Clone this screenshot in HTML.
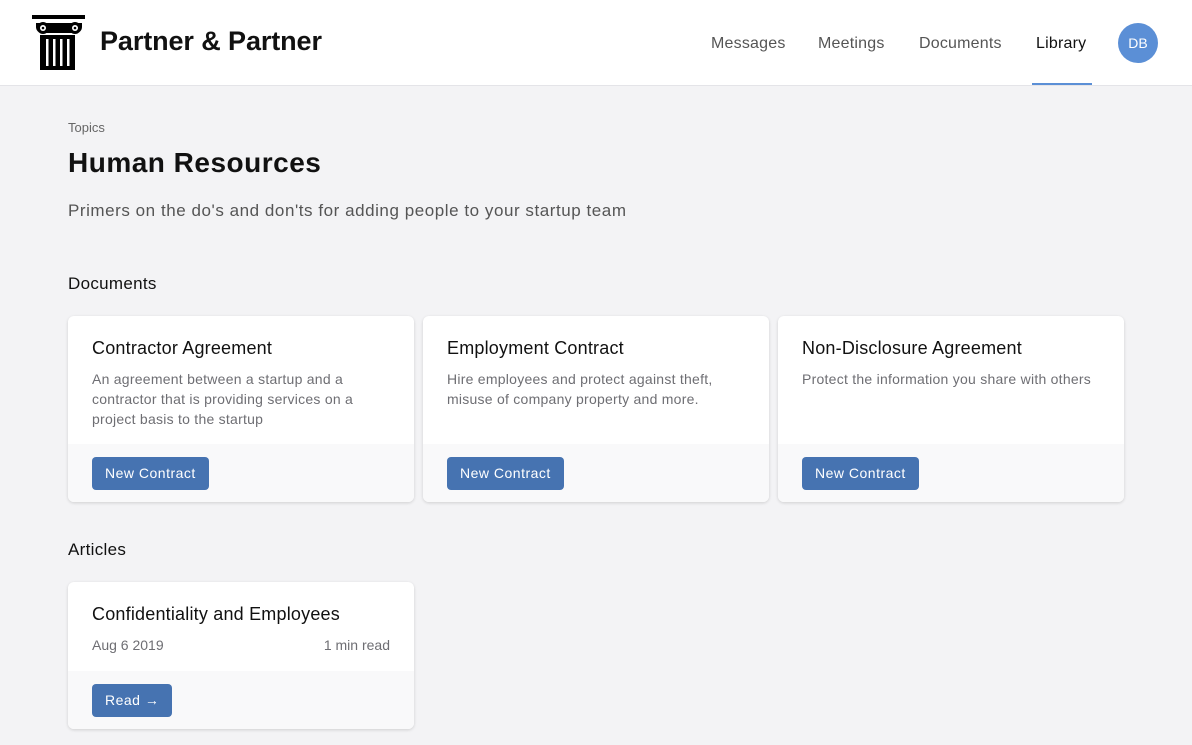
<!DOCTYPE html>
<html><head><style>
*{box-sizing:border-box;margin:0;padding:0}
body{width:1192px;height:745px;background:#f3f3f5;font-family:"Liberation Sans",sans-serif;color:#1a1a1a;position:relative;overflow:hidden}
.hdr{position:absolute;left:0;top:0;width:1192px;height:86px;background:#fff;border-bottom:1px solid #e4e4e8}
.brand{position:absolute;left:100px;top:26px;font-size:27px;font-weight:bold;letter-spacing:-0.1px;color:#111}
.nav a{position:absolute;top:35px;font-size:16px;color:#555;text-decoration:none;letter-spacing:0.2px}
.ul{position:absolute;left:1032px;top:83px;width:60px;height:2px;background:#5b8fd6}
.av{position:absolute;left:1118px;top:23px;width:40px;height:40px;border-radius:50%;background:#5b8fd6;color:#fff;font-size:14px;text-align:center;line-height:40px}
.t{position:absolute}
.card{position:absolute;width:346px;background:#fff;border-radius:6px;box-shadow:0 1px 3px rgba(0,0,0,.15);overflow:hidden}
.card h3{position:absolute;left:24px;top:22px;font-size:18px;font-weight:normal;color:#111;letter-spacing:0.2px}
.card p{position:absolute;left:24px;top:53px;width:275px;font-size:14px;line-height:20px;color:#6e6e73;letter-spacing:0.25px}
.foot{position:absolute;left:0;bottom:0;width:100%;height:58px;background:#f9f9fa}
.btn{position:absolute;left:24px;top:13px;height:33px;padding:0 13px;background:#4673b1;color:#fff;border-radius:4px;font-size:14px;line-height:33px;letter-spacing:0.5px}
</style></head><body>
<div class="hdr">
<svg style="position:absolute;left:32px;top:15px" width="54" height="55" viewBox="0 0 54 55">
<rect x="0" y="0" width="53" height="4" fill="#000"/>
<path d="M4 8h46v4a6 6 0 0 1-6 6H10a6 6 0 0 1-6-6z" fill="#000"/>
<circle cx="11" cy="13" r="6" fill="#000"/><circle cx="43" cy="13" r="6" fill="#000"/>
<circle cx="11" cy="13" r="3" fill="#fff"/><circle cx="43" cy="13" r="3" fill="#fff"/>
<circle cx="11" cy="13" r="1.3" fill="#000"/><circle cx="43" cy="13" r="1.3" fill="#000"/>
<rect x="8" y="20" width="35" height="35" fill="#000"/>
<rect x="14" y="24" width="2.5" height="27" fill="#fff"/><rect x="21" y="24" width="2.5" height="27" fill="#fff"/><rect x="28" y="24" width="2.5" height="27" fill="#fff"/><rect x="35" y="24" width="2.5" height="27" fill="#fff"/>
</svg>
<div class="brand">Partner &amp; Partner</div>
<div class="nav"><a style="left:711px">Messages</a><a style="left:818px">Meetings</a><a style="left:919px">Documents</a><a style="left:1036px;color:#111">Library</a></div>
<div class="ul"></div>
<div class="av">DB</div>
</div>
<div class="t" style="left:68px;top:120px;font-size:13px;color:#666">Topics</div>
<div class="t" style="left:68px;top:147px;font-size:28px;font-weight:bold;color:#111;letter-spacing:0.5px">Human Resources</div>
<div class="t" style="left:68px;top:201px;font-size:17px;color:#555;letter-spacing:0.55px">Primers on the do's and don'ts for adding people to your startup team</div>
<div class="t" style="left:68px;top:274px;font-size:17px;color:#111;letter-spacing:0.3px">Documents</div>
<div class="card" style="left:68px;top:316px;height:186px"><h3>Contractor Agreement</h3><p>An agreement between a startup and a contractor that is providing services on a project basis to the startup</p><div class="foot"><div class="btn">New Contract</div></div></div>
<div class="card" style="left:423px;top:316px;height:186px"><h3>Employment Contract</h3><p>Hire employees and protect against theft, misuse of company property and more.</p><div class="foot"><div class="btn">New Contract</div></div></div>
<div class="card" style="left:778px;top:316px;height:186px"><h3>Non-Disclosure Agreement</h3><p style="width:300px">Protect the information you share with others</p><div class="foot"><div class="btn">New Contract</div></div></div>
<div class="t" style="left:68px;top:540px;font-size:17px;color:#111;letter-spacing:0.3px">Articles</div>
<div class="card" style="left:68px;top:582px;height:147px"><h3>Confidentiality and Employees</h3>
<div class="t" style="left:24px;top:55px;font-size:14px;color:#6e6e73">Aug 6 2019</div>
<div class="t" style="right:24px;top:55px;font-size:14px;color:#6e6e73">1 min read</div>
<div class="foot"><div class="btn">Read →</div></div></div>
</body></html>
